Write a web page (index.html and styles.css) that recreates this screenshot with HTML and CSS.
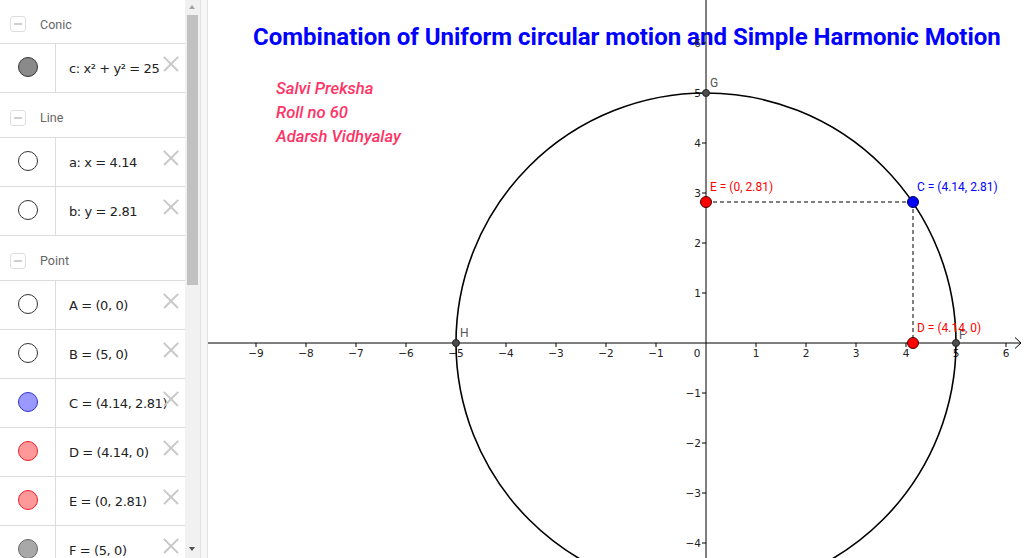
FILE: index.html
```html
<!DOCTYPE html>
<html>
<head>
<meta charset="utf-8">
<link rel="stylesheet" href="styles.css">
</head>
<body>
<div class="app">
  <div class="algebra">
    <div class="list">
      <div class="group"><span class="minus"></span><span class="gname">Conic</span></div>
      <div class="item"><div class="marble m-gray"></div><div class="def">c: x² + y² = 25</div><span class="del"></span></div>
      <div class="group"><span class="minus"></span><span class="gname">Line</span></div>
      <div class="item"><div class="marble m-empty"></div><div class="def">a: x = 4.14</div><span class="del"></span></div>
      <div class="item"><div class="marble m-empty"></div><div class="def">b: y = 2.81</div><span class="del"></span></div>
      <div class="group"><span class="minus"></span><span class="gname">Point</span></div>
      <div class="item"><div class="marble m-empty"></div><div class="def">A = (0, 0)</div><span class="del"></span></div>
      <div class="item"><div class="marble m-empty"></div><div class="def">B = (5, 0)</div><span class="del"></span></div>
      <div class="item"><div class="marble m-blue"></div><div class="def">C = (4.14, 2.81)</div><span class="del"></span></div>
      <div class="item"><div class="marble m-red"></div><div class="def">D = (4.14, 0)</div><span class="del"></span></div>
      <div class="item"><div class="marble m-red"></div><div class="def">E = (0, 2.81)</div><span class="del"></span></div>
      <div class="item"><div class="marble m-lgray"></div><div class="def">F = (5, 0)</div><span class="del"></span></div>
    </div>
  </div>
  <div class="scrollbar">
    <span class="arrow-up"></span>
    <div class="thumb"></div>
    <span class="arrow-down"></span>
  </div>
  <div class="splitter"></div>
  <div class="graphics">
    <svg class="canvas" width="816" height="558" viewBox="208 0 816 558" xmlns="http://www.w3.org/2000/svg">
      <text class="title" x="253" y="45">Combination of Uniform circular motion and Simple Harmonic Motion</text>
      <text class="pink" x="276" y="94">Salvi Preksha</text>
      <text class="pink" x="276" y="118">Roll no 60</text>
      <text class="pink" x="276" y="142">Adarsh Vidhyalay</text>

      <!-- axes -->
      <line x1="207" y1="343" x2="1021" y2="343" stroke="#000" stroke-width="1"/>
      <polyline points="1015,337.5 1021,343 1015,348.5" fill="none" stroke="#000" stroke-width="1"/>
      <line x1="706" y1="0" x2="706" y2="558" stroke="#000" stroke-width="1"/>
      <g stroke="#000" stroke-width="1">
        <line x1="256" y1="343" x2="256" y2="347"/><line x1="306" y1="343" x2="306" y2="347"/>
        <line x1="356" y1="343" x2="356" y2="347"/><line x1="406" y1="343" x2="406" y2="347"/>
        <line x1="456" y1="343" x2="456" y2="347"/><line x1="506" y1="343" x2="506" y2="347"/>
        <line x1="556" y1="343" x2="556" y2="347"/><line x1="606" y1="343" x2="606" y2="347"/>
        <line x1="656" y1="343" x2="656" y2="347"/><line x1="756" y1="343" x2="756" y2="347"/>
        <line x1="806" y1="343" x2="806" y2="347"/><line x1="856" y1="343" x2="856" y2="347"/>
        <line x1="906" y1="343" x2="906" y2="347"/><line x1="956" y1="343" x2="956" y2="347"/>
        <line x1="1006" y1="343" x2="1006" y2="347"/>
        <line x1="702" y1="43" x2="706" y2="43"/><line x1="702" y1="93" x2="706" y2="93"/>
        <line x1="702" y1="143" x2="706" y2="143"/><line x1="702" y1="193" x2="706" y2="193"/>
        <line x1="702" y1="243" x2="706" y2="243"/><line x1="702" y1="293" x2="706" y2="293"/>
        <line x1="702" y1="393" x2="706" y2="393"/><line x1="702" y1="443" x2="706" y2="443"/>
        <line x1="702" y1="493" x2="706" y2="493"/><line x1="702" y1="543" x2="706" y2="543"/>
      </g>
      <g class="ax">
        <text x="256" y="357">−9</text><text x="306" y="357">−8</text><text x="356" y="357">−7</text>
        <text x="406" y="357">−6</text><text x="456" y="357">−5</text><text x="506" y="357">−4</text>
        <text x="556" y="357">−3</text><text x="606" y="357">−2</text><text x="656" y="357">−1</text>
        <text x="697" y="357">0</text>
        <text x="756" y="357">1</text><text x="806" y="357">2</text><text x="856" y="357">3</text>
        <text x="906" y="357">4</text><text x="956" y="357">5</text><text x="1006" y="357">6</text>
      </g>
      <g class="ay">
        <text x="701" y="47">6</text><text x="701" y="97">5</text><text x="701" y="147">4</text>
        <text x="701" y="197">3</text><text x="701" y="247">2</text><text x="701" y="297">1</text>
        <text x="701" y="397">−1</text><text x="701" y="447">−2</text><text x="701" y="497">−3</text>
        <text x="701" y="547">−4</text>
      </g>

      <circle cx="706" cy="343" r="250" fill="none" stroke="#000" stroke-width="1.6"/>
      <line x1="706" y1="202" x2="913" y2="202" stroke="#000" stroke-width="1" stroke-dasharray="4 3"/>
      <line x1="913" y1="202" x2="913" y2="343" stroke="#000" stroke-width="1" stroke-dasharray="4 3"/>

      <circle cx="706" cy="93" r="3.5" fill="#4d4d4d" stroke="#222"/>
      <circle cx="456" cy="343" r="3.5" fill="#4d4d4d" stroke="#222"/>
      <circle cx="956" cy="343" r="3.5" fill="#4d4d4d" stroke="#222"/>
      <circle cx="913" cy="202" r="5.5" fill="#0000ff" stroke="#00004d" stroke-width="1"/>
      <circle cx="706" cy="202" r="5.5" fill="#ff0000" stroke="#4d0000" stroke-width="1"/>
      <circle cx="913" cy="343" r="5.5" fill="#ff0000" stroke="#4d0000" stroke-width="1"/>

      <text class="lbl grey" x="710" y="87">G</text>
      <text class="lbl grey" x="460" y="337">H</text>
      <text class="lbl grey" x="959" y="339">F</text>
      <text class="lbl red" x="710" y="191">E = (0, 2.81)</text>
      <text class="lbl blue" x="917" y="191">C = (4.14, 2.81)</text>
      <text class="lbl red" x="917" y="332">D = (4.14, 0)</text>
    </svg>
  </div>
</div>
</body>
</html>
```

FILE: styles.css
```css
html, body {
  margin: 0;
  padding: 0;
  background: #fff;
  overflow: hidden;
}
.app {
  display: flex;
  width: 1024px;
  height: 558px;
  font-family: "Liberation Sans", Arial, sans-serif;
}
.algebra {
  width: 185px;
  height: 558px;
  overflow: hidden;
  flex: none;
}
.group {
  height: 45px;
  box-sizing: border-box;
  border-bottom: 1px solid #dcdcdc;
  display: flex;
  align-items: center;
  padding-top: 5px;
  padding-left: 10px;
}
.group:first-child {
  height: 44px;
}
.minus {
  width: 14px;
  height: 14px;
  border: 1px solid #dedede;
  border-radius: 3px;
  position: relative;
  flex: none;
}
.minus::after {
  content: "";
  position: absolute;
  left: 3px;
  right: 3px;
  top: 6px;
  height: 2px;
  background: #cfcfcf;
}
.gname {
  margin-left: 14px;
  font-family: Roboto, "Liberation Sans", sans-serif;
  font-size: 12.5px;
  color: #666;
}
.item {
  height: 49px;
  box-sizing: border-box;
  border-bottom: 1px solid #dcdcdc;
  display: flex;
  align-items: stretch;
  position: relative;
}
.marble {
  width: 56px;
  flex: none;
  border-right: 1px solid #dcdcdc;
  box-sizing: border-box;
  position: relative;
}
.marble::before {
  content: "";
  position: absolute;
  left: 18px;
  top: 13px;
  width: 18px;
  height: 18px;
  border-radius: 50%;
  border: 1px solid #333;
}
.m-empty::before { background: #fff; border-color: #333; }
.m-gray::before { background: #8a8a8a; border-color: #333; }
.m-lgray::before { background: #a8a8a8; border-color: #666; }
.m-blue::before { background: #9999ff; border-color: #3333cc; }
.m-red::before { background: #ff9999; border-color: #e61e2b; }
.def {
  flex: 1;
  display: flex;
  align-items: center;
  padding-left: 13px;
  font-family: "DejaVu Sans", sans-serif;
  font-size: 13px;
  color: #222;
  white-space: nowrap;
  overflow: hidden;
  letter-spacing: -0.4px;
}
.del {
  position: absolute;
  right: 6px;
  top: 12px;
  width: 16px;
  height: 16px;
}
.del::before, .del::after {
  content: "";
  position: absolute;
  left: -2px;
  top: 7px;
  width: 20px;
  height: 1.6px;
  background: #c8c8c8;
  transform: rotate(45deg);
}
.del::after {
  transform: rotate(-45deg);
}
.scrollbar {
  width: 15px;
  flex: none;
  background: #f1f1f1;
  position: relative;
}
.thumb {
  position: absolute;
  left: 2px;
  width: 11px;
  top: 15px;
  height: 270px;
  background: #c1c1c1;
}
.arrow-up {
  position: absolute;
  left: 4px;
  top: 5px;
  border-left: 3.5px solid transparent;
  border-right: 3.5px solid transparent;
  border-bottom: 4px solid #a3a3a3;
}
.arrow-down {
  position: absolute;
  left: 4px;
  bottom: 7px;
  border-left: 3.5px solid transparent;
  border-right: 3.5px solid transparent;
  border-top: 4px solid #505050;
}
.splitter {
  width: 6px;
  flex: none;
  background: #f7f7f7;
  border-left: 1px solid #e2e2e2;
  border-right: 1px solid #e2e2e2;
}
.graphics {
  flex: 1;
  overflow: hidden;
}
.canvas {
  display: block;
}
.title {
  font-family: Roboto, "Liberation Sans", sans-serif;
  font-weight: bold;
  font-size: 24px;
  fill: #0000ff;
}
.pink {
  font-family: Roboto, "Liberation Sans", sans-serif;
  font-style: italic;
  font-weight: 500;
  font-size: 16.6px;
  fill: #ff3366;
}
.ax text, .ay text {
  font-family: "DejaVu Sans", sans-serif;
  font-size: 10.5px;
  fill: #222;
}
.ax text { text-anchor: middle; }
.ay text { text-anchor: end; }
.lbl {
  font-family: Roboto, "Liberation Sans", sans-serif;
  font-size: 12px;
}
.grey { fill: #555; }
.red { fill: #ff0000; }
.blue { fill: #0000ff; }
```
